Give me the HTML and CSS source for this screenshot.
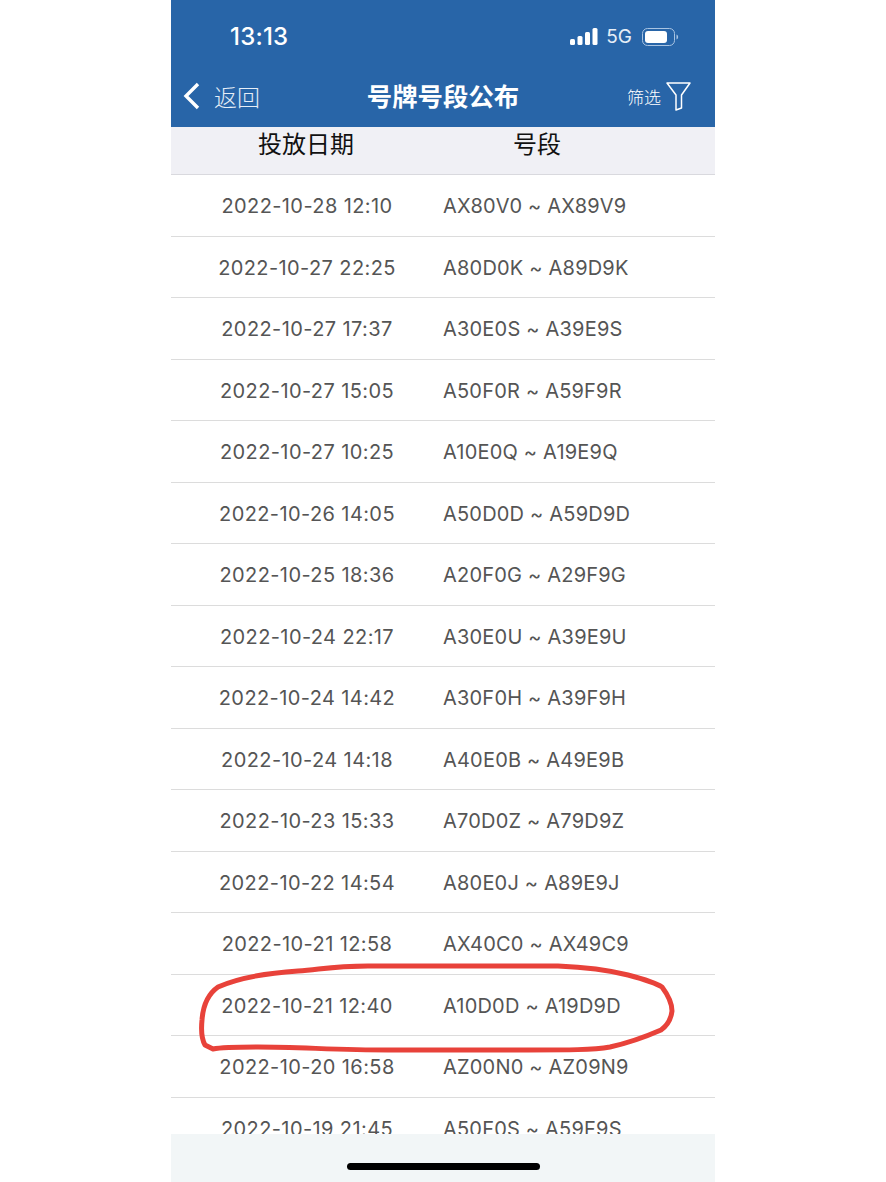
FILE: index.html
```html
<!DOCTYPE html>
<html lang="zh-CN">
<head>
  <meta charset="UTF-8">
  <meta name="viewport" content="width=device-width, initial-scale=1.0">
  <title>号牌号段公布</title>
  <link rel="stylesheet" href="styles.css">
</head>
<body>
  <div class="phone">
    <header class="top">
      <div class="status">
        <span class="time">13:13</span>
        <div class="status-right">
          <svg class="signal" width="28" height="17" viewBox="0 0 28 17">
            <rect x="0" y="11" width="5" height="6" rx="1.5" fill="#fff"/>
            <rect x="7.5" y="8" width="5" height="9" rx="1.5" fill="#fff"/>
            <rect x="15" y="4" width="5" height="13" rx="1.5" fill="#fff"/>
            <rect x="22.5" y="0" width="5" height="17" rx="1.5" fill="#fff"/>
          </svg>
          <span class="net">5G</span>
          <svg class="battery" width="37" height="18" viewBox="0 0 37 18">
            <rect x="0.5" y="0.5" width="32" height="17" rx="5" fill="none" stroke="#a9c4e2"/>
            <rect x="3" y="3" width="22" height="12" rx="3" fill="#fff"/>
            <path d="M34.5 6.5c1.2.5 1.6 1.4 1.6 2.5s-.4 2-1.6 2.5z" fill="#a9c4e2"/>
          </svg>
        </div>
      </div>
      <nav class="nav">
        <div class="back">
          <svg width="18" height="28" viewBox="0 0 18 28">
            <path d="M15 2 3 14l12 12" fill="none" stroke="#fff" stroke-width="3.4"/>
          </svg>
          <span>返回</span>
        </div>
        <h1>号牌号段公布</h1>
        <div class="filter">
          <span>筛选</span>
          <svg width="25" height="29" viewBox="0 0 25 29">
            <path d="M1 1h23L15.500 13v13L10 28V13z" fill="none" stroke="#fff" stroke-width="1.500" stroke-linejoin="round"/>
          </svg>
        </div>
      </nav>
    </header>

    <div class="thead">
      <div>投放日期</div>
      <div>号段</div>
    </div>

    <div class="list">
      <div class="row"><span class="date">2022-10-28 12:10</span><span class="range">AX80V0 ~ AX89V9</span></div>
      <div class="row"><span class="date">2022-10-27 22:25</span><span class="range">A80D0K ~ A89D9K</span></div>
      <div class="row"><span class="date">2022-10-27 17:37</span><span class="range">A30E0S ~ A39E9S</span></div>
      <div class="row"><span class="date">2022-10-27 15:05</span><span class="range">A50F0R ~ A59F9R</span></div>
      <div class="row"><span class="date">2022-10-27 10:25</span><span class="range">A10E0Q ~ A19E9Q</span></div>
      <div class="row"><span class="date">2022-10-26 14:05</span><span class="range">A50D0D ~ A59D9D</span></div>
      <div class="row"><span class="date">2022-10-25 18:36</span><span class="range">A20F0G ~ A29F9G</span></div>
      <div class="row"><span class="date">2022-10-24 22:17</span><span class="range">A30E0U ~ A39E9U</span></div>
      <div class="row"><span class="date">2022-10-24 14:42</span><span class="range">A30F0H ~ A39F9H</span></div>
      <div class="row"><span class="date">2022-10-24 14:18</span><span class="range">A40E0B ~ A49E9B</span></div>
      <div class="row"><span class="date">2022-10-23 15:33</span><span class="range">A70D0Z ~ A79D9Z</span></div>
      <div class="row"><span class="date">2022-10-22 14:54</span><span class="range">A80E0J ~ A89E9J</span></div>
      <div class="row"><span class="date">2022-10-21 12:58</span><span class="range">AX40C0 ~ AX49C9</span></div>
      <div class="row"><span class="date">2022-10-21 12:40</span><span class="range">A10D0D ~ A19D9D</span></div>
      <div class="row"><span class="date">2022-10-20 16:58</span><span class="range">AZ00N0 ~ AZ09N9</span></div>
      <div class="row"><span class="date">2022-10-19 21:45</span><span class="range">A50F0S ~ A59F9S</span></div>
    </div>

    <footer class="bottom"><div class="home-bar"></div></footer>

    <!-- hand drawn red mark over the row -->
    <svg class="mark" width="490" height="100" viewBox="0 0 490 100">
      <path d="M7 83C3 76 3 68 4 58C5 44 10 32 20 25C40 16 70 11 100 9C125 7 135 4 170 4L360 4C385 5 410 8 430 13C445 17 458 21 464 25C470 33 474 41 474 49C473 57 470 63 463 68C447 75 430 81 412 85C395 88 370 88 330 88L190 88C140 88 100 85 60 85C40 85 25 85 15 87Z" fill="none" stroke="#e8423a" stroke-width="5" stroke-linejoin="round"/>
    </svg>
  </div>
</body>
</html>
```

FILE: styles.css
```css
body {
  margin: 0;
  background-color: #fff;
  font-family: Inter, "Noto Sans CJK SC", sans-serif;
}

.phone {
  position: relative;
  width: 544px;
  height: 1182px;
  margin: 0 auto;
  display: flex;
  flex-direction: column;
  overflow: hidden;
}

.top {
  height: 127px;
  flex-shrink: 0;
  background-color: #2865a8;
  color: #fff;
}

.status {
  height: 73px;
  display: flex;
  justify-content: space-between;
  align-items: center;
  padding: 0 36px 0 59px;
  box-sizing: border-box;
}

.time {
  font-size: 24px;
  font-weight: 500;
  letter-spacing: 0.2px;
}

.status-right {
  display: flex;
  align-items: center;
  gap: 8px;
}

.net {
  font-size: 19px;
  margin-right: 2px;
  color: #e6eef7;
}

.nav {
  height: 46px;
  display: grid;
  grid-template-columns: 1fr auto 1fr;
  align-items: center;
  padding: 0 12px;
}

.nav h1 {
  margin: 0;
  line-height: 1;
  font-size: 25.4px;
  font-weight: 700;
  font-family: "Noto Sans CJK SC", sans-serif;
}

.back {
  display: flex;
  align-items: center;
  gap: 13px;
  line-height: 1;
  font-family: "Noto Sans CJK SC", sans-serif;
  font-size: 23px;
  font-weight: 300;
  color: #e6eef7;
}

.filter {
  display: flex;
  justify-content: flex-end;
  align-items: center;
  gap: 5px;
  padding-right: 12px;
  line-height: 1;
  font-family: "Noto Sans CJK SC", sans-serif;
  font-size: 17px;
  font-weight: 300;
}

.thead {
  height: 48px;
  flex-shrink: 0;
  display: grid;
  grid-template-columns: 270px 192px;
  border-bottom: 1px solid #d9d9de;
  background-color: #f0f0f5;
  box-sizing: border-box;
  font-family: "Noto Sans CJK SC", sans-serif;
  font-size: 24px;
  line-height: 32px;
  color: #111;
  text-align: center;
}

.list {
  flex: 1;
  overflow: hidden;
}

.row {
  height: 61.500px;
  padding-top: 2px;
  box-sizing: border-box;
  display: grid;
  grid-template-columns: 272px 1fr;
  align-items: center;
  border-bottom: 1px solid #dcdcdc;
  font-size: 20px;
  color: #555;
}

.date {
  text-align: center;
  letter-spacing: 0.4px;
}

.range {
  letter-spacing: 0.2px;
}

.bottom {
  height: 48px;
  flex-shrink: 0;
  display: flex;
  justify-content: center;
  align-items: flex-end;
  background-color: #f2f6f7;
}

.home-bar {
  width: 193px;
  height: 7px;
  margin-bottom: 12px;
  border-radius: 4px;
  background-color: #000;
}

.mark {
  position: absolute;
  left: 27px;
  top: 962px;
}
```
